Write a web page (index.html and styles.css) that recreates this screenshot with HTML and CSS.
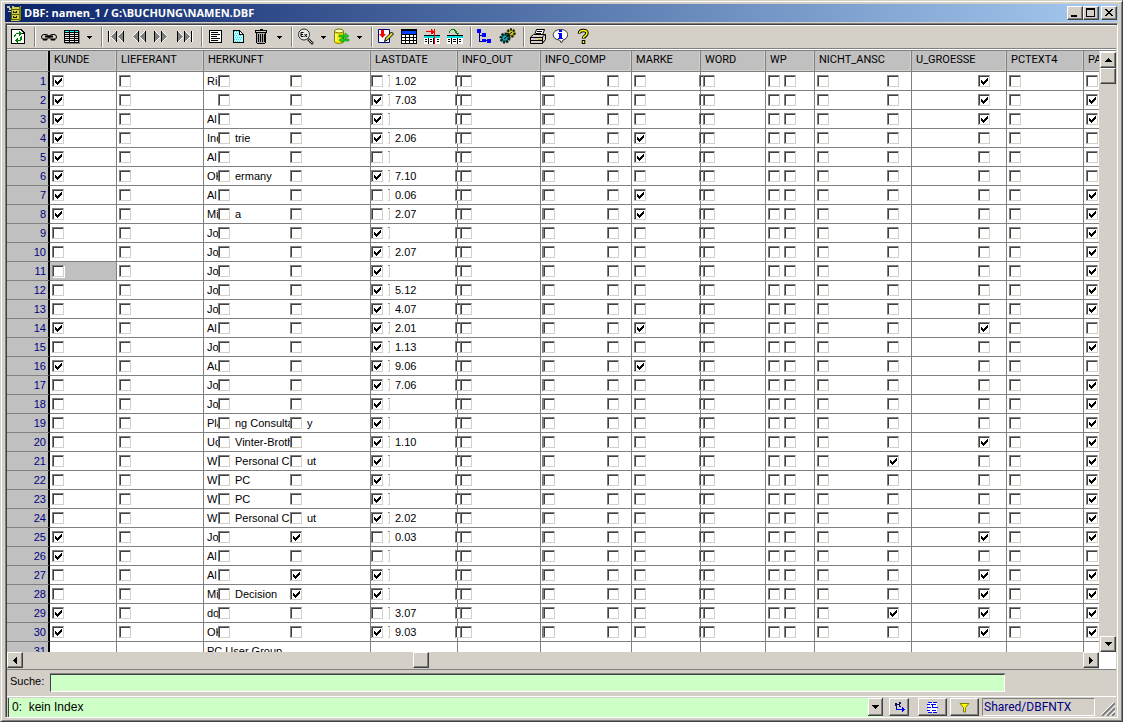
FILE: index.html
```html
<!DOCTYPE html>
<html lang="de">
<head>
<meta charset="utf-8">
<title>DBF: namen_1 / G:\BUCHUNG\NAMEN.DBF</title>
<link rel="stylesheet" href="styles.css">
</head>
<body>
<main class="window">
  <header class="titlebar">
    <svg class="app-icon" width="16" height="16" viewBox="0 0 16 16" shape-rendering="crispEdges" aria-hidden="true">
      <path d="M0 1h3v2H0zM2 3h3v2H2zM5 1h2v2H5zM1 6h3v1H1z" fill="#c8c8b0"/>
      <path d="M5 2h8l1-2v13l-2 3H4V3z" fill="#d0d040"/>
      <path d="M12 2h2v12l-2 2z" fill="#808000"/>
      <path d="M4 4h8v1H4zM4 9h8v1H4zM4 14h8v1H4zM4 3h1v12H4z" fill="#606000"/>
      <path d="M6 6h1v2H6zM9 6h1v2H9zM7 7h2v1H7zM6 11h1v2H6zM9 11h1v2H9zM7 12h2v1H7z" fill="#202000"/>
    </svg>
    <h1 class="title">DBF: namen_1 / G:\BUCHUNG\NAMEN.DBF</h1>
    <button class="caption" type="button" aria-label="Minimieren"><svg width="10" height="10" viewBox="0 0 10 10" shape-rendering="crispEdges"><path d="M1 7h6v2H1z"/></svg></button>
    <button class="caption" type="button" aria-label="Maximieren"><svg width="10" height="10" viewBox="0 0 10 10" shape-rendering="crispEdges"><path d="M0 0h9v9H0zM1 2v6h7V2z" fill-rule="evenodd"/></svg></button>
    <button class="caption close" type="button" aria-label="Schließen"><svg width="10" height="10" viewBox="0 0 10 10" shape-rendering="crispEdges"><path d="M1 1h2v1h1v1h2V2h1V1h2v1H8v1H7v1H6v1h1v1h1v1h1v1H7V7H6V6H4v1H3v1H1V7h1V6h1V5h1V4H3V3H2V2H1z"/></svg></button>
  </header>

  <section class="client">
    <nav class="toolbar" aria-label="Werkzeuge">
      <button class="tool" type="button" aria-label="Aktualisieren"><svg width="17" height="17" viewBox="0 0 17 17" shape-rendering="crispEdges">
        <path d="M1 1h10l4 4v11H1z" fill="#000"/><path d="M2 2h9v4h3v9H2z" fill="#fff"/><path d="M11 3h1v1h1v1h-2z" fill="#fff"/>
        <path d="M5 6h1V5h3V3h1v1h1v1h1v1h-1v1h-1v1H9V6H6v2H5v1H4V7h1zM11 8h1v4h-1v1H8v2H7v-1H6v-1H5v-1h1v-1h1v-1h1v2h2V9h1z" fill="#008000"/></svg></button>
      <span class="sep"></span>
      <button class="tool" type="button" aria-label="Verknüpfen"><svg width="17" height="17" viewBox="0 0 17 17">
        <rect x="1.500" y="6.500" width="7" height="5" rx="2.500" fill="none" stroke="#000"/><rect x="9.500" y="6.500" width="7" height="5" rx="2.500" fill="none" stroke="#000"/><path d="M3 11.500h4M11 11.500h4" stroke="#000" stroke-width="2"/><path d="M5 8.500h8" stroke="#000" stroke-width="2"/></svg></button>
      <button class="tool" type="button" aria-label="Tabelle"><svg width="17" height="17" viewBox="0 0 17 17" shape-rendering="crispEdges">
        <path d="M2 3h15v13H2z" fill="#808080"/><path d="M1 2h15v13H1z"/><path d="M2 3h4v1H2zM7 3h4v1H7zM12 3h3v1h-3z" fill="#00ffff"/><path d="M2 5h4v1H2zM7 5h4v1H7zM12 5h3v1h-3zM2 7h4v1H2zM7 7h4v1H7zM12 7h3v1h-3zM2 9h4v1H2zM7 9h4v1H7zM12 9h3v1h-3zM2 11h4v1H2zM7 11h4v1H7zM12 11h3v1h-3zM2 13h4v1H2zM7 13h4v1H7zM12 13h3v1h-3z" fill="#e8e8e8"/></svg></button>
      <button class="drop" type="button" aria-label="Tabelle, mehr"><svg width="5" height="3" viewBox="0 0 5 3" shape-rendering="crispEdges"><path d="M0 0h5v1H4v1H3v1H2V2H1V1H0z"/></svg></button>
      <span class="sep wide"></span>
      <button class="tool" type="button" aria-label="Erster Satz"><svg width="17" height="17" viewBox="0 0 17 17"><path d="M9 3v11L3.500 8.500zM16 3v11l-5.500-5.500z" fill="#808080"/><path d="M2.500 3v11M9 3L3.500 8.500 9 14M16 3l-5.500 5.500L16 14" fill="none" stroke="#fff"/><path d="M1.500 3v11M9.500 3v11M16.500 3v11" stroke="#000"/></svg></button>
      <button class="tool" type="button" aria-label="Seite zurück"><svg width="17" height="17" viewBox="0 0 17 17"><path d="M8 3v11L2.500 8.500zM15 3v11L9.500 8.500z" fill="#808080"/><path d="M8 3L2.500 8.500 8 14M15 3L9.500 8.500 15 14" fill="none" stroke="#fff"/><path d="M8.500 3v11M15.500 3v11" stroke="#000"/></svg></button>
      <button class="tool" type="button" aria-label="Seite vor"><svg width="17" height="17" viewBox="0 0 17 17"><path d="M2 3v11l5.500-5.500zM9 3v11l5.500-5.500z" fill="#808080"/><path d="M2 3l5.500 5.500L2 14M9 3l5.500 5.500L9 14" fill="none" stroke="#fff"/><path d="M1.500 3v11M8.500 3v11" stroke="#000"/></svg></button>
      <button class="tool" type="button" aria-label="Letzter Satz"><svg width="17" height="17" viewBox="0 0 17 17"><path d="M2 3v11l5.500-5.500zM9 3v11l5.500-5.500z" fill="#808080"/><path d="M2 3l5.500 5.500L2 14M9 3l5.500 5.500L9 14M16.500 3v11" fill="none" stroke="#fff"/><path d="M1.500 3v11M8.500 3v11M15.500 3v11" stroke="#000"/></svg></button>
      <span class="sep wide"></span>
      <button class="tool" type="button" aria-label="Satz anzeigen"><svg width="17" height="17" viewBox="0 0 17 17" shape-rendering="crispEdges"><path d="M2 2h13v13H2z"/><path d="M3 3h11v11H3z" fill="#fff"/><path d="M4 4h7v1H4zM4 6h9v1H4zM4 8h6v1H4zM4 10h9v1H4zM4 12h7v1H4z"/></svg></button>
      <button class="tool" type="button" aria-label="Neuer Satz"><svg width="17" height="17" viewBox="0 0 17 17" shape-rendering="crispEdges"><path d="M3 2h7v1h1v1h1v1h1v1h1v9H3z"/><path d="M4 3h5v4h4v7H4z" fill="#b0ffff"/><path d="M10 4h1v1h1v1h-2z" fill="#fff"/><path d="M4 3h1v1H4zM6 3h1v1H6zM8 3h1v1H8zM5 5h1v1H5zM7 5h1v1H7zM4 7h1v1H4zM6 7h1v1H6zM8 7h1v1H8zM10 7h1v1h-1zM5 9h1v1H5zM7 9h1v1H7zM9 9h1v1H9zM11 9h1v1h-1zM4 11h1v1H4zM6 11h1v1H6zM8 11h1v1H8zM10 11h1v1h-1zM5 13h1v1H5zM7 13h1v1H7zM9 13h1v1H9z" fill="#40d8f0"/></svg></button>
      <button class="tool" type="button" aria-label="Satz löschen"><svg width="17" height="17" viewBox="0 0 17 17" shape-rendering="crispEdges"><path d="M7 1h3v1h4v3h-1v10h-1v1H4v-1H3V5H2V2h5z"/><path d="M3 3h10v1H3z" fill="#d4d0c8"/><path d="M4 5h1v10H4zM6 6h1v8H6zM8 6h1v8H8zM10 6h1v8h-1zM5 5h7v1H5zM5 14h7v1H5z" fill="#a8a8a8"/></svg></button>
      <button class="drop" type="button" aria-label="Löschen, mehr"><svg width="5" height="3" viewBox="0 0 5 3" shape-rendering="crispEdges"><path d="M0 0h5v1H4v1H3v1H2V2H1V1H0z"/></svg></button>
      <span class="sep wide"></span>
      <button class="tool" type="button" aria-label="Ausdruck suchen"><svg width="17" height="17" viewBox="0 0 17 17"><circle cx="7" cy="6.500" r="5.500" fill="#e8e8e8" stroke="#303030"/><path d="M11 11l5 5" stroke="#202020" stroke-width="2.500"/><path d="M11.500 11.500l4 4" stroke="#c0c0c0"/><path d="M6.500 4.500H4v4h2.500M4 6.500h2M7.500 6l2.500 3M10 6L7.500 9" fill="none" stroke="#000"/></svg></button>
      <button class="drop" type="button" aria-label="Suchen, mehr"><svg width="5" height="3" viewBox="0 0 5 3" shape-rendering="crispEdges"><path d="M0 0h5v1H4v1H3v1H2V2H1V1H0z"/></svg></button>
      <button class="tool" type="button" aria-label="Daten übertragen"><svg width="17" height="17" viewBox="0 0 17 17"><path d="M1.500 3v10.500c0 2.500 9 2.500 9 0V3" fill="#ffe800" stroke="#808000"/><ellipse cx="6" cy="3" rx="4.500" ry="2" fill="#ffffb0" stroke="#707000"/><path d="M3 6v7" stroke="#fff"/><path d="M6 7h6V5l4 3-4 3V9H6zM16 11v2h-6v2l-4-3 4-3v2z" fill="#20d020" stroke="#008000" stroke-width=".5"/></svg></button>
      <button class="drop" type="button" aria-label="Übertragen, mehr"><svg width="5" height="3" viewBox="0 0 5 3" shape-rendering="crispEdges"><path d="M0 0h5v1H4v1H3v1H2V2H1V1H0z"/></svg></button>
      <span class="sep wide"></span>
      <button class="tool" type="button" aria-label="Ersetzen"><svg width="17" height="17" viewBox="0 0 17 17"><path d="M1.500 1.500h11v13h-11z" fill="#fff" stroke="#000080"/><path d="M4 2h3v4h2l-3.500 4L2 6h2z" fill="#f00"/><path d="M7.500 13.500l1-3.500 6-6 2 2-6 6z" fill="#e0d840" stroke="#000"/></svg></button>
      <button class="tool" type="button" aria-label="Struktur"><svg width="17" height="17" viewBox="0 0 17 17" shape-rendering="crispEdges"><path d="M1 1h16v15H1z"/><path d="M2 3h14v3H2z" fill="#0040ff"/><path d="M2 7h3v2H2zM6 7h3v2H6zM10 7h3v2h-3zM14 7h2v2h-2zM2 10h3v2H2zM6 10h3v2H6zM10 10h3v2h-3zM14 10h2v2h-2zM2 13h3v2H2zM6 13h3v2H6zM10 13h3v2h-3zM14 13h2v2h-2z" fill="#fff"/></svg></button>
      <button class="tool" type="button" aria-label="Spalten fixieren"><svg width="17" height="17" viewBox="0 0 17 17" shape-rendering="crispEdges"><path d="M1 7h16v9H1z" fill="#fff"/><path d="M1 7h16v1H1zM5 10h1v6H5zM10 10h1v6h-1zM2 11h2v1H2zM7 11h2v1H7zM14 11h2v1h-2zM2 13h2v1H2zM7 13h2v1H7zM14 13h2v1h-2z"/><path d="M1 8h16v2H1z" fill="#00e0e0"/><path d="M3 3h5V1h1v1h1v1h1V1h1v15h-1V5h-1v1H8V4H3z" fill="#f00"/></svg></button>
      <button class="tool" type="button" aria-label="Spalten lösen"><svg width="17" height="17" viewBox="0 0 17 17" shape-rendering="crispEdges"><path d="M1 7h16v9H1z" fill="#fff"/><path d="M1 7h16v1H1zM5 10h1v6H5zM11 10h1v6h-1zM2 11h2v1H2zM7 11h3v1H7zM13 11h2v1h-2zM2 13h2v1H2zM7 13h3v1H7zM13 13h2v1h-2z"/><path d="M1 8h16v2H1z" fill="#00e0e0"/><path d="M3 3h1V2h1V1h4v1h1v1h1v2h2v1h-1v1h-1V6h-1V5H9V3H8V2H5v1H4v2H3z" fill="#008000"/></svg></button>
      <span class="sep"></span>
      <button class="tool" type="button" aria-label="Baum"><svg width="17" height="17" viewBox="0 0 17 17" shape-rendering="crispEdges"><path d="M1 1h4v4H1zM6 5h4v4H6zM11 11h4v4h-4zM6 11h4v3H6z" fill="#0000ff"/><path d="M3 5h1v2h2v1H3zM3 8h1v5h2v1H3zM10 12h1v1h-1z" fill="#000080"/></svg></button>
      <button class="tool" type="button" aria-label="Einstellungen"><svg width="17" height="17" viewBox="0 0 17 17"><circle cx="12" cy="5" r="3.500" fill="#c0c000" stroke="#202000" stroke-width="2.500" stroke-dasharray="2 1"/><circle cx="6" cy="10" r="4" fill="#008080" stroke="#002020" stroke-width="3" stroke-dasharray="2 1"/><circle cx="6" cy="10" r="2.500" fill="#20a0b0"/><circle cx="12" cy="5" r="2" fill="#d0c840"/><path d="M5 11l8-7" stroke="#000"/></svg></button>
      <span class="sep"></span>
      <button class="tool" type="button" aria-label="Drucken"><svg width="17" height="17" viewBox="0 0 17 17"><path d="M5.500 7l2-5.500h8l-2 5.500z" fill="#fff" stroke="#000"/><path d="M8 3.500h5M7 5.500h5" stroke="#000"/><path d="M1.500 9l3-2.500h12v5l-3 4h-12z" fill="#d4d0c8" stroke="#000"/><path d="M1 9.500h12l3-3M13.500 9v6M2 12.500h11" fill="none" stroke="#000"/><path d="M9 11.500h3" stroke="#c0c000"/></svg></button>
      <button class="tool" type="button" aria-label="Info"><svg width="17" height="17" viewBox="0 0 17 17"><path d="M8.500 1.500c9 0 9 9 2.500 10.500L9.500 15l-2-3c-9-.500-8-10.500 1-10.500z" fill="#fff" stroke="#303030"/><path d="M7 2h3v2H7zM6 5h4v5h1v1H6v-1h1V6H6z" fill="#0000ff"/></svg></button>
      <button class="tool" type="button" aria-label="Hilfe"><svg width="17" height="17" viewBox="0 0 17 17"><path d="M4.500 5.500C4 1.500 12 1.500 12 5c0 3-3.500 3-3.500 5.500M8.500 12v4" fill="none" stroke="#000" stroke-width="3.500"/><path d="M4.500 5C4.500 1.500 12 2 12 5c0 3-3.500 2.500-3.500 5M8.500 13v2" fill="none" stroke="#ffff00" stroke-width="1.500"/></svg></button>
    </nav>

    <div class="grid-area">
      <div class="viewport">
        <table class="grid">
          <colgroup>
            <col class="w-num"><col class="w-kunde"><col class="w-lief"><col class="w-herk"><col class="w-date"><col class="w-out"><col class="w-comp"><col class="w-marke"><col class="w-word"><col class="w-wp"><col class="w-nicht"><col class="w-groesse"><col class="w-pctext"><col class="w-last">
          </colgroup>
          <thead>
            <tr><th class="num"></th><th>KUNDE</th><th>LIEFERANT</th><th>HERKUNFT</th><th>LASTDATE</th><th>INFO_OUT</th><th>INFO_COMP</th><th>MARKE</th><th>WORD</th><th>WP</th><th>NICHT_ANSC</th><th>U_GROESSE</th><th>PCTEXT4</th><th>PA</th></tr>
          </thead>
          <tbody id="rows"></tbody>
        </table>
      </div>
      <div class="vscroll">
        <button class="scroll-btn" type="button" aria-label="Nach oben"><svg width="7" height="4" viewBox="0 0 7 4" shape-rendering="crispEdges"><path d="M3 0h1v1h1v1h1v1h1v1H0V3h1V2h1V1h1z"/></svg></button>
        <span class="thumb"></span>
        <span class="track"></span>
        <button class="scroll-btn" type="button" aria-label="Nach unten"><svg width="7" height="4" viewBox="0 0 7 4" shape-rendering="crispEdges"><path d="M0 0h7v1H6v1H5v1H4v1H3V3H2V2H1V1H0z"/></svg></button>
      </div>
    </div>
    <div class="hscroll">
      <button class="scroll-btn" type="button" aria-label="Nach links"><svg width="4" height="7" viewBox="0 0 4 7" shape-rendering="crispEdges"><path d="M3 0h1v7H3V6H2V5H1V4H0V3h1V2h1V1h1z"/></svg></button>
      <span class="track before"></span>
      <span class="thumb"></span>
      <span class="track after"></span>
      <button class="scroll-btn" type="button" aria-label="Nach rechts"><svg width="4" height="7" viewBox="0 0 4 7" shape-rendering="crispEdges"><path d="M0 0h1v1h1v1h1v1h1v1H3v1H2v1H1v1H0z"/></svg></button>
    </div>

    <div class="search">
      <label for="suche">Suche:</label>
      <input id="suche" class="search-input" type="text">
    </div>

    <footer class="status">
      <select class="index-select" aria-label="Index"><option>0:&nbsp; kein Index</option></select>
      <button class="status-btn small" type="button" aria-label="Index wählen"><svg width="11" height="11" viewBox="0 0 11 11" shape-rendering="crispEdges"><path d="M1 1h2v1h2V0h2v2H6v2h1v1H5V3H3v1H1zM2 4h1v4H2z" fill="#101060"/><path d="M2 7h6V5h1v1h1v1h1v1h-1v1H9v1H8V8H2z" fill="#0000ff"/></svg></button>
      <button class="status-btn" type="button" aria-label="Relation"><svg width="11" height="11" viewBox="0 0 11 11" shape-rendering="crispEdges"><path d="M1 0h9v11H1z" fill="#fff"/><path d="M1 0h4v1H1zM6 0h4v1H6zM0 2h3v1H0zM4 2h5v1H4zM5 3h1v2H5zM0 5h4v1H0zM5 5h6v1H5zM0 8h3v1H0zM5 8h4v1H5zM1 10h4v1H1zM6 10h4v1H6z" fill="#0000ff"/></svg></button>
      <button class="status-btn" type="button" aria-label="Filter"><svg width="11" height="11" viewBox="0 0 11 11"><path d="M1 1.500h9L6.500 5.500V10h-2V5.500z" fill="#ffff00" stroke="#808000"/></svg></button>
      <span class="driver">Shared/DBFNTX</span>
      <svg class="grip" width="14" height="14" viewBox="0 0 14 14" aria-hidden="true"><path d="M1 14L14 1M6 14l8-8M11 14l3-3" stroke="#808080" stroke-width="2"/><path d="M0 13L13 0M4 14L14 4M9 14l5-5" stroke="#fff"/></svg>
    </footer>
  </section>
</main>
<script src="grid.js"></script>
</body>
</html>
```
FILE: styles.css
```css
* { box-sizing: border-box; }

body {
  margin: 0;
  font: 11px/13px "Liberation Sans", Arial, sans-serif;
  color: #000;
  background: #d4d0c8;
}

button, input, select { font: inherit; margin: 0; padding: 0; border-radius: 0; }
button svg { display: block; flex: none; }

.window {
  height: 100vh;
  display: flex;
  flex-direction: column;
  padding: 3px 4px;
  background: #d4d0c8;
  border: 1px solid;
  border-color: #d4d0c8 #404040 #404040 #d4d0c8;
  box-shadow: inset 1px 1px #fff, inset -1px -1px #808080;
}

.titlebar {
  display: flex;
  align-items: center;
  flex: none;
  height: 18px;
  padding: 0 1px 0 2px;
  background: linear-gradient(to right, #0a246a, #a6caf0);
}
.app-icon { flex: none; margin-right: 1px; }
.title {
  flex: 1;
  margin: 0;
  color: #fff;
  font: bold 11px/18px "Open Sans", Tahoma, sans-serif;
  white-space: nowrap;
  overflow: hidden;
}

.caption, .scroll-btn, .thumb, .status-btn {
  display: flex;
  align-items: center;
  justify-content: center;
  flex: none;
  background: #d4d0c8;
  border: 1px solid;
  border-color: #fff #404040 #404040 #fff;
  box-shadow: inset -1px -1px #808080;
}
.caption { width: 16px; height: 14px; }
.close { margin-left: 2px; }

.client {
  flex: 1;
  min-height: 0;
  display: flex;
  flex-direction: column;
  margin-top: 1px;
  padding: 1px 1px 0;
  border: 1px solid;
  border-color: #808080 #fff #fff #808080;
  box-shadow: inset 1px 1px #404040;
}

.toolbar {
  display: flex;
  align-items: flex-start;
  flex: none;
  height: 25px;
  border-top: 1px solid #fff;
  border-bottom: 1px solid #fff;
  box-shadow: inset 0 -1px #808080;
}
.tool, .drop {
  display: flex;
  align-items: center;
  justify-content: center;
  flex: none;
  width: 23px;
  height: 21px;
  border: 0;
  background: none;
}
.drop { width: 13px; height: 23px; }
.sep {
  flex: none;
  width: 2px;
  height: 20px;
  margin: 1px 1px 0 4px;
  border-left: 1px solid #808080;
  border-right: 1px solid #fff;
}
.sep.wide { margin-left: 5px; }

.grid-area {
  flex: 1;
  min-height: 0;
  display: flex;
  border-top: 1px solid #808080;
}
.viewport {
  flex: 1;
  min-width: 0;
  overflow: hidden;
  background: #fff;
}

.grid {
  table-layout: fixed;
  width: 1162px;
  border-spacing: 0;
}
.w-num { width: 43px; }
.w-kunde { width: 67px; }
.w-lief, .w-date { width: 87px; }
.w-herk { width: 167px; }
.w-out { width: 83px; }
.w-comp { width: 91px; }
.w-marke { width: 69px; }
.w-word { width: 65px; }
.w-wp { width: 49px; }
.w-nicht { width: 97px; }
.w-groesse { width: 95px; }
.w-pctext { width: 77px; }
.w-last { width: 85px; }

.grid th, .grid td {
  padding: 0;
  border-right: 1px solid #808080;
  border-bottom: 1px solid #808080;
  font-weight: normal;
  text-align: left;
  white-space: nowrap;
}
.grid thead th {
  height: 21px;
  padding: 2px 0 0 4px;
  vertical-align: top;
  background: #c0c0c0;
  box-shadow: inset -1px -1px #d4d0c8;
  font-family: Roboto, "Liberation Sans", sans-serif;
}
.grid .num {
  border-right: 2px solid #000;
  background: #c0c0c0;
  color: #000080;
}
.grid tbody .num { padding-right: 2px; text-align: right; }

.cell {
  position: relative;
  display: flex;
  align-items: center;
  height: 18px;
  padding-left: 2px;
}
.cell.text { padding-left: 3px; }
.cell.date { padding-left: 0; gap: 5px; }
.cell.spread { justify-content: space-between; padding-right: 12px; }
.cell.pair { gap: 4px; }
.cell.end { justify-content: flex-end; padding-right: 16px; }
.cell.selected { background: #c0c0c0; }
.selected .check { box-shadow: 1px 1px #fff; }

.check {
  appearance: none;
  flex: none;
  width: 12px;
  height: 12px;
  margin: 0;
  border: 1px solid;
  border-color: #808080 #d4d0c8 #d4d0c8 #808080;
  background: linear-gradient(#404040, #404040) 0 0 / 10px 1px no-repeat,
    linear-gradient(#404040, #404040) 0 0 / 1px 10px no-repeat, #fff;
}
.check:checked::before {
  content: "";
  display: block;
  width: 7px;
  height: 7px;
  margin: 2px;
  background: #000;
  clip-path: polygon(0 2px, 1px 2px, 1px 3px, 2px 3px, 2px 4px, 3px 4px, 3px 3px, 4px 3px, 4px 2px, 5px 2px, 5px 1px, 6px 1px, 6px 0, 7px 0, 7px 3px, 6px 3px, 6px 4px, 5px 4px, 5px 5px, 4px 5px, 4px 6px, 3px 6px, 3px 7px, 2px 7px, 2px 6px, 1px 6px, 1px 5px, 0 5px);
}
.check.under { position: absolute; left: -3px; }
.check.under.near { left: -2px; }
.check.under + .check { position: relative; }
.check.double { box-shadow: -1px 0 #808080; }

.pre { flex: none; width: 11px; overflow: hidden; }
.mid { flex: none; width: 60px; padding-left: 5px; overflow: hidden; }
.tail { padding-left: 5px; }
.rest { flex: none; width: 2px; height: 12px; border: 1px solid #d4d0c8; border-top-color: #808080; border-left: 0; }

.vscroll {
  display: flex;
  flex-direction: column;
  flex: none;
  width: 17px;
  padding-left: 1px;
  border-top: 1px solid #fff;
  background: #d4d0c8;
}
.scroll-btn, .thumb { width: 16px; height: 16px; }
.track { flex: 1; background: #d4d0c8; }

.hscroll {
  display: flex;
  flex: none;
  height: 17px;
  margin-right: 17px;
  box-shadow: 17px 0 #fff;
}
.track.before { flex: 390; }
.track.after { flex: 655; }

.search {
  display: flex;
  align-items: center;
  flex: none;
  height: 27px;
  gap: 6px;
  padding-left: 3px;
  padding-right: 111px;
  border-top: 1px solid #808080;
}
.search label { padding-bottom: 3px; }
.search-input {
  flex: 1;
  min-width: 0;
  height: 18px;
  border: 1px solid;
  border-color: #404040 #fff #fff #404040;
  background: #ceffc6;
  box-shadow: 0 -1px #808080;
}

.status {
  display: flex;
  align-items: center;
  flex: none;
  height: 21px;
  border-top: 1px solid #fff;
}
.index-select {
  flex: 1;
  min-width: 0;
  height: 19px;
  margin: 0 6px 0 1px;
  padding-left: 3px;
  appearance: none;
  border: 0;
  border-left: 1px solid #404040;
  font-size: 12px;
  color: #000;
  background: url("data:image/svg+xml,%3Csvg xmlns='http://www.w3.org/2000/svg' width='15' height='18' shape-rendering='crispEdges'%3E%3Cpath d='M0 0h15v18H0z' fill='%23404040'/%3E%3Cpath d='M0 0h14v17H0z' fill='%23fff'/%3E%3Cpath d='M1 1h13v16H1z' fill='%23808080'/%3E%3Cpath d='M1 1h12v15H1z' fill='%23d4d0c8'/%3E%3Cpath d='M4 7h7v1h-1v1H9v1H8v1H7v-1H6V9H5V8H4z'/%3E%3C/svg%3E") right center no-repeat #ceffc6;
}
.status-btn { width: 29px; height: 18px; margin-right: 3px; }
.status-btn.small { width: 20px; margin-right: 9px; }
.driver {
  width: 113px;
  height: 18px;
  padding-left: 1px;
  border: 1px solid;
  border-color: #808080 #fff #fff #808080;
  color: #000080;
  font: 12px/16px Roboto, "Liberation Sans", sans-serif;
}
.grip { flex: none; margin: 4px 1px 0 6px; }
```
FILE: grid.js
```js
// Flags: K = KUNDE, H = second box in HERKUNFT, L = LASTDATE, M = MARKE,
// N = second box in NICHT_ANSC, U = U_GROESSE, P = last column.
const records = [
  ["KU", "Ric", "", "", "1.02"],
  ["KLUP", "", "", "", "7.03"],
  ["KLUP", "Al", "", "", ""],
  ["KLM", "Ind", "trie", "", "2.06"],
  ["KM", "Al", "", "", ""],
  ["KL", "OK", "ermany", "", "7.10"],
  ["KMP", "Al", "", "", "0.06"],
  ["KMP", "Mi", "a", "", "2.07"],
  ["LP", "Jo", "", "", ""],
  ["LP", "Jo", "", "", "2.07"],
  ["LP", "Jo", "", "", ""],
  ["LP", "Jo", "", "", "5.12"],
  ["LP", "Jo", "", "", "4.07"],
  ["KLMU", "Al", "", "", "2.01"],
  ["LP", "Jo", "", "", "1.13"],
  ["KLM", "Au", "", "", "9.06"],
  ["LP", "Jo", "", "", "7.06"],
  ["LP", "Jo", "", "", ""],
  ["LP", "Pla", "ng Consulta", "y", ""],
  ["LUP", "Uc", "Vinter-Broth", "", "1.10"],
  ["LNP", "W", "Personal Co", "ut", ""],
  ["LP", "W", "PC", "", ""],
  ["LP", "W", "PC", "", ""],
  ["LP", "W", "Personal Co", "ut", "2.02"],
  ["KHUP", "Jo", "", "", "0.03"],
  ["K", "Al", "", "", ""],
  ["HLUP", "Al", "", "", ""],
  ["HLUP", "Mi", "Decision", "", ""],
  ["KNUP", "do", "", "", "3.07"],
  ["KLUP", "OK", "", "", "9.03"]
];

const selectedRow = 11;

function renderRow([flags, pre, mid, tail, date], index) {
  const n = index + 1;
  const box = (name, flag, cls = "") =>
    `<input type="checkbox" class="check ${cls}" aria-label="${name} ${n}"${flag && flags.includes(flag) ? " checked" : ""}>`;
  const td = (cls, content) => `<td><div class="cell ${cls}">${content}</div></td>`;
  return `<tr><th class="num">${n}</th>` +
    td(n === selectedRow ? "selected" : "", box("KUNDE", "K")) +
    td("", box("LIEFERANT")) +
    td("text", `<span class="pre">${pre}</span>${box("HERKUNFT a")}<span class="mid">${mid}</span>${box("HERKUNFT b", "H")}<span class="tail">${tail}</span>`) +
    td("date", `${box("LASTDATE", "L")}<span class="rest"></span><span>${date}</span>`) +
    td("", box("INFO_OUT a", "", "under") + box("INFO_OUT b")) +
    td("spread", box("INFO_COMP a", "", "double") + box("INFO_COMP b")) +
    td("", box("MARKE", "M")) +
    td("", box("WORD a", "", "under near") + box("WORD b")) +
    td("pair", box("WP a") + box("WP b")) +
    td("spread", box("NICHT_ANSC a") + box("NICHT_ANSC b", "N")) +
    td("end", box("U_GROESSE", "U")) +
    td("", box("PCTEXT4")) +
    td("", box("PA", "P")) + "</tr>";
}

const lastRow = `<tr><th class="num">31</th>${"<td></td>".repeat(2)}<td><div class="cell text">PC User Group</div></td>${"<td></td>".repeat(10)}</tr>`;

document.getElementById("rows").innerHTML = records.map(renderRow).join("") + lastRow;
```
